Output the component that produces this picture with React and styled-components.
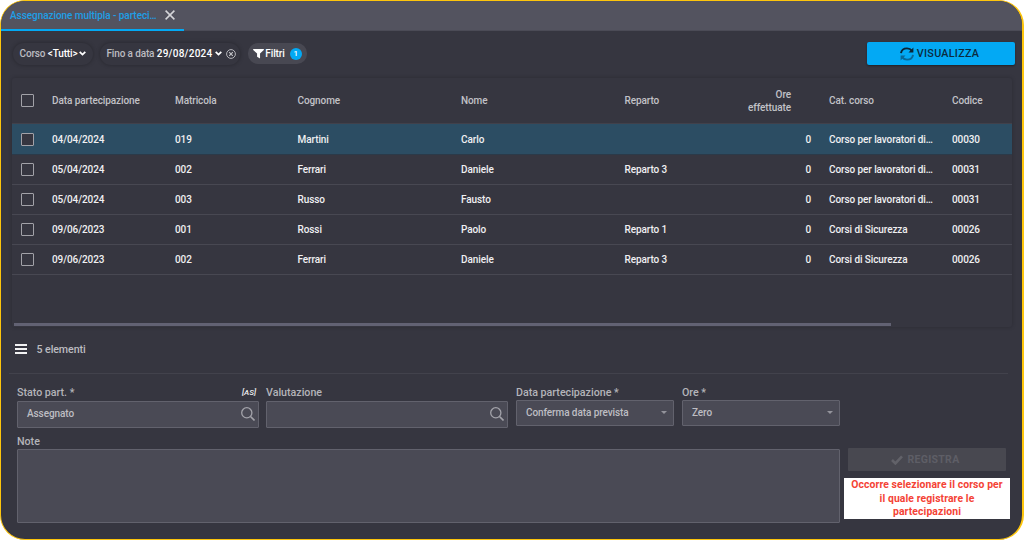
import React, { useState } from "react";
import styled, { createGlobalStyle } from "styled-components";

const columns = ["Data partecipazione", "Matricola", "Cognome", "Nome", "Reparto", "Ore effettuate", "Cat. corso", "Codice"];

const rows = [
	["04/04/2024", "019", "Martini", "Carlo", "", "0", "Corso per lavoratori di…", "00030"],
	["05/04/2024", "002", "Ferrari", "Daniele", "Reparto 3", "0", "Corso per lavoratori di…", "00031"],
	["05/04/2024", "003", "Russo", "Fausto", "", "0", "Corso per lavoratori di…", "00031"],
	["09/06/2023", "001", "Rossi", "Paolo", "Reparto 1", "0", "Corsi di Sicurezza", "00026"],
	["09/06/2023", "002", "Ferrari", "Daniele", "Reparto 3", "0", "Corsi di Sicurezza", "00026"],
];

const Chevron = () => (
	<svg width="7" height="5" viewBox="0 0 7 5" fill="none" stroke="#fff" strokeWidth="1.8">
		<path d="M.7.9 3.5 3.6 6.3.9" />
	</svg>
);

const Lens = () => (
	<svg width="14" height="14" viewBox="0 0 14 14" fill="none" stroke="#a3a3aa" strokeWidth="1.3">
		<circle cx="5.8" cy="5.8" r="5.1" />
		<path d="m9.5 9.5 4 4" strokeWidth="1.6" />
	</svg>
);

function App() {
	const [selected, setSelected] = useState(0);

	return (
		<>
			<GlobalStyle />
			<Frame>
				<TabBar>
					<Tab>
						Assegnazione multipla - parteci…
						<svg width="10" height="10" viewBox="0 0 10 10" stroke="#d5d5d9" strokeWidth="1.5">
							<path d="m.6.6 8.8 8.8M9.4.6.6 9.4" />
						</svg>
					</Tab>
				</TabBar>

				<Toolbar>
					<Pill $width={80}>
						<span>Corso <b>&lt;Tutti&gt;</b></span>
						<Chevron />
					</Pill>
					<Pill $width={140}>
						<span>Fino a data <Strong $spacing={0.25}>29/08/2024</Strong></span>
						<Chevron />
						<ClearIcon width="10" height="10" viewBox="0 0 10 10" fill="none" stroke="#c4c4c8">
							<circle cx="5" cy="5" r="4.4" strokeWidth=".9" />
							<path d="m3.2 3.2 3.6 3.6m0-3.6L3.2 6.8" strokeWidth="1.1" />
						</ClearIcon>
					</Pill>
					<FilterButton>
						<svg width="11" height="10" viewBox="0 0 10 10" preserveAspectRatio="none" fill="#fff">
							<path d="M.4 0h9.2q.6.4.2.9L6.4 4.6v5L3.7 7.8V4.6L.2.9Q-.1.3.4 0Z" />
						</svg>
						Filtri
						<Badge>1</Badge>
					</FilterButton>
					<ShowButton>
						<svg width="14" height="14" viewBox="0 0 14 14" fill="none" strokeWidth="1.9">
							<path d="M1 6.2C1.4 3.2 4 1.4 7 1.4c2.2 0 3.9 1 5 2.5" stroke="#0b2434" />
							<path d="M13.4.6v4.9H8.5Z" fill="#0b2434" />
							<path d="M13 7.8c-.4 3-3 4.8-6 4.8-2.2 0-3.9-1-5-2.5" stroke="#07699a" />
							<path d="M.6 13.4V8.5h4.9Z" fill="#07699a" />
						</svg>
						VISUALIZZA
					</ShowButton>
				</Toolbar>

				<TableCard>
					<HeaderRow>
						<Check />
						{columns.map((name, i) => (
							<HeaderCell key={name} $numeric={i === 5}>{name}</HeaderCell>
						))}
					</HeaderRow>
					{rows.map((row, i) => (
						<Row key={i} $active={selected === i} onClick={() => setSelected(i)}>
							<Check />
							{row.map((value, j) => (
								<Cell key={j} $numeric={j === 5}>{value}</Cell>
							))}
						</Row>
					))}
					<ScrollThumb />
				</TableCard>

				<Summary>
					<svg width="12" height="10" viewBox="0 0 12 10" fill="#f2f2f3">
						<path d="M0 0h12v2H0zM0 4h12v2H0zM0 8h12v2H0z" />
					</svg>
					{rows.length} elementi
				</Summary>

				<Form>
					<Fields>
						<FieldRow>
							<Field $width={242}>
								<Label>Stato part. * <Code>[AS]</Code></Label>
								<Input>Assegnato <Lens /></Input>
							</Field>
							<Field $width={242}>
								<Label>Valutazione</Label>
								<Input><span /> <Lens /></Input>
							</Field>
							<Field $width={158}>
								<Label>Data partecipazione *</Label>
								<Select>Conferma data prevista <Caret /></Select>
							</Field>
							<Field $width={158}>
								<Label>Ore *</Label>
								<Select>Zero <Caret /></Select>
							</Field>
						</FieldRow>
						<NoteLabel>Note</NoteLabel>
						<Note />
					</Fields>
					<Actions>
						<SaveButton disabled>
							<svg width="12" height="10" viewBox="0 0 12 10" fill="none" stroke="#626269" strokeWidth="2.6">
								<path d="m1 5 3.4 3.4L11 1.4" />
							</svg>
							REGISTRA
						</SaveButton>
						<Warning>Occorre selezionare il corso per il quale registrare le partecipazioni</Warning>
					</Actions>
				</Form>
			</Frame>
		</>
	);
}

export default App;

const GlobalStyle = createGlobalStyle`
	* {
		box-sizing: border-box;
	}

	body {
		margin: 0;
		background: #fff;
		font-family: Roboto, sans-serif;
	}

	svg {
		display: block;
		flex: none;
	}
`;

const Frame = styled.div`
	width: 1024px;
	height: 540px;
	border: 1px solid #fdc50c;
	border-right-width: 2px;
	border-radius: 25px;
	background: #363640;
	overflow: hidden;
	font-size: 10px;
	font-weight: 500;
	letter-spacing: -0.09px;
	color: #f0f0f2;
`;

const TabBar = styled.div`
	display: flex;
	height: 30px;
	background: #53535f;
	border-bottom: 1px solid #4b4b56;
`;

const Tab = styled.div`
	display: flex;
	justify-content: space-between;
	align-items: center;
	width: 183px;
	height: 30px;
	padding: 0 9px 0 9px;
	border-bottom: 2px solid #03a9f4;
	color: #1e9fe6;
	letter-spacing: -0.06px;
	white-space: nowrap;
`;

const Toolbar = styled.div`
	display: flex;
	align-items: center;
	height: 47px;
	padding: 0 7px 2px 12px;
	gap: 7px;
`;

const Pill = styled.div`
	display: flex;
	align-items: center;
	justify-content: center;
	gap: 2px;
	width: ${({ $width }) => $width}px;
	height: 22px;
	border-radius: 11px;
	box-shadow: 0 0 4px rgba(0, 0, 0, 0.3);
	color: #bcbcc1;
	letter-spacing: -0.14px;
	white-space: nowrap;

	b {
		font-weight: 500;
		color: #fff;
	}
`;

const Strong = styled.b`
	letter-spacing: ${({ $spacing }) => $spacing}px;
`;

const ClearIcon = styled.svg`
	margin-left: 2px;
	margin-right: -2px;
`;

const FilterButton = styled.button`
	display: flex;
	align-items: center;
	justify-content: center;
	gap: 1px;
	width: 59px;
	height: 21px;
	margin-left: 1px;
	padding: 0;
	border: none;
	border-radius: 10px;
	background: #484852;
	color: #fff;
	font: inherit;
	letter-spacing: inherit;
`;

const Badge = styled.span`
	width: 12px;
	height: 12px;
	margin-left: 4px;
	border-radius: 50%;
	background: #03a9f4;
	font-size: 8px;
	line-height: 12px;
	text-align: center;
`;

const ShowButton = styled.button`
	display: flex;
	align-items: center;
	justify-content: center;
	gap: 3px;
	width: 148px;
	height: 23px;
	margin-left: auto;
	padding: 0 3px 0 0;
	border: none;
	border-radius: 2px;
	background: #03a9f4;
	box-shadow: 0 1px 2px rgba(0, 0, 0, 0.4);
	color: #0b2b3e;
	font: 500 10.8px Roboto, sans-serif;
	letter-spacing: 0.25px;
`;

const TableCard = styled.div`
	display: flex;
	flex-direction: column;
	width: 1000px;
	height: 249px;
	margin-left: 11px;
	border-radius: 3px;
	box-shadow: 0 0 4px rgba(0, 0, 0, 0.22);
`;

const Row = styled.div`
	display: grid;
	grid-template-columns: 40px 123px 122.5px 163.5px 163.5px 113px 91.5px 123px 60px;
	align-items: center;
	height: ${({ $active }) => ($active ? 31 : 30)}px;
	border-bottom: 1px solid ${({ $active }) => ($active ? "#2b3a49" : "#484852")};
	background: ${({ $active }) => ($active ? "#2c4d63" : "transparent")};
`;

const HeaderRow = styled(Row)`
	height: 46px;
	border-bottom: 1px solid #41414b;
	color: #c2c2c7;
`;

const Cell = styled.div`
	white-space: nowrap;
	text-align: ${({ $numeric }) => ($numeric ? "right" : "left")};
	padding-right: ${({ $numeric }) => ($numeric ? 18 : 0)}px;
`;

const HeaderCell = styled(Cell)`
	white-space: normal;
	line-height: 13px;
	padding-right: ${({ $numeric }) => ($numeric ? 38 : 0)}px;
`;

const Check = styled.span`
	width: 13px;
	height: 13px;
	margin-left: 9px;
	border: 1px solid #a2a2a8;
	border-radius: 1px;
	background: #363640;
`;

const ScrollThumb = styled.div`
	width: 877px;
	height: 3px;
	margin: auto 0 1px 2px;
	background: #626273;
`;

const Summary = styled.div`
	display: flex;
	align-items: center;
	gap: 10px;
	height: 47px;
	margin: 0 14px 0 8px;
	padding: 0 0 2px 5.5px;
	border-bottom: 1px solid #42424c;
	color: #bcbcc1;
	font-size: 10.65px;
`;

const Form = styled.div`
	display: flex;
	padding: 12px 10px 0 16px;
`;

const Fields = styled.div`
	width: 823px;
`;

const FieldRow = styled.div`
	display: flex;
	gap: 7px;
`;

const Field = styled.div`
	width: ${({ $width }) => $width}px;
	flex: none;

	&:nth-child(n + 3) {
		margin-left: 1px;
	}
`;

const Label = styled.label`
	display: flex;
	justify-content: space-between;
	align-items: center;
	height: 14px;
	padding-bottom: 1px;
	color: #b4b4b9;
	font-size: 10.7px;
	letter-spacing: -0.02px;
`;

const Code = styled.i`
	margin-right: 3px;
	color: #f0f0f2;
	font-size: 8px;
`;

const Input = styled.div`
	display: flex;
	justify-content: space-between;
	align-items: center;
	height: 27px;
	margin-top: 1px;
	padding: 0 3px 2px 9px;
	border: 1px solid #62626d;
	border-radius: 1px;
	background: #4a4a55;
	color: #bebec3;
`;

const Select = styled(Input)`
	height: 26px;
	margin-top: 0;
	padding-right: 6px;
`;

const Caret = styled.span`
	border: 3.5px solid transparent;
	border-top-color: #94949c;
	border-bottom: none;
`;

const NoteLabel = styled(Label)`
	height: 13px;
	margin: 7px 0 1px;
	padding: 0;
`;

const Note = styled.textarea`
	display: block;
	width: 100%;
	height: 74px;
	border: 1px solid #62626d;
	border-radius: 1px;
	background: #4a4a55;
	resize: none;
`;

const Actions = styled.div`
	width: 166px;
	margin: 62px 0 0 4px;
`;

const SaveButton = styled.button`
	display: flex;
	align-items: center;
	justify-content: center;
	gap: 4px;
	width: 158px;
	height: 23px;
	margin: 0 4px 7px;
	padding: 0 3px 0 0;
	border: none;
	border-radius: 1px;
	background: #484850;
	color: #5e5e66;
	font: 700 10.5px Roboto, sans-serif;
	letter-spacing: 0.3px;
`;

const Warning = styled.div`
	height: 41px;
	padding: 0 5px;
	background: #fff;
	color: #f44336;
	font-size: 10.4px;
	font-weight: 700;
	letter-spacing: 0.1px;
	line-height: 13.7px;
	text-align: center;
`;
